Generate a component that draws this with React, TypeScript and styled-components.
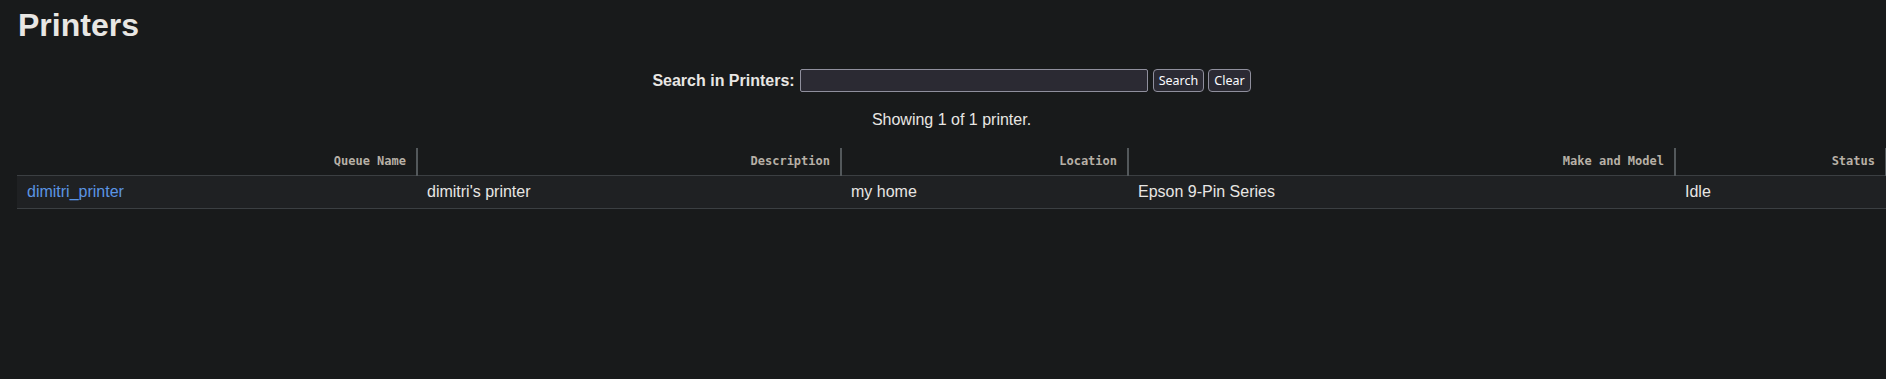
import React from "react";
import styled, { createGlobalStyle } from "styled-components";

const GlobalStyle = createGlobalStyle`
  html, body {
    margin: 0;
    padding: 0;
    background: #181a1b;
  }
  body {
    font-family: "Liberation Sans", Arial, sans-serif;
    font-size: 16px;
    color: #e8e6e3;
  }
`;

const Page = styled.div`
  min-height: 379px;
  padding: 0 0 0 17px;
  box-sizing: border-box;
  overflow: hidden;
`;

const Title = styled.h1`
  margin: 7px 0 0 1px;
  font-size: 32px;
  line-height: 37px;
  font-weight: bold;
  color: #e8e6e3;
`;

const SearchForm = styled.form`
  display: flex;
  align-items: center;
  justify-content: center;
  gap: 5px;
  margin-top: 25px;
`;

const SearchLabel = styled.label`
  font-weight: bold;
  font-size: 16px;
  color: #e8e6e3;
`;

const SearchInput = styled.input`
  box-sizing: border-box;
  width: 348px;
  height: 23px;
  margin: 0;
  padding: 2px 4px;
  background: #2b2a33;
  border: 1px solid #8f8f9d;
  border-radius: 2px;
  color: #fbfbfe;
  font-family: "Noto Sans", sans-serif;
  font-size: 13px;
  outline: none;
`;

const FormButton = styled.button<{ $pad?: number }>`
  box-sizing: border-box;
  height: 23px;
  margin: 0;
  padding: 0 ${(p) => p.$pad ?? 5}px;
  background: #2b2a33;
  border: 1px solid #8f8f9d;
  border-radius: 4px;
  color: #fbfbfe;
  font-family: "Noto Sans", sans-serif;
  font-size: 12.5px;
  line-height: 21px;
  cursor: pointer;
`;

const ButtonGroup = styled.div`
  display: flex;
  gap: 4px;
`;

const Summary = styled.p`
  margin: 19px 0 0;
  text-align: center;
  font-size: 16px;
  line-height: 18px;
  color: #e8e6e3;
`;

const ListTable = styled.table`
  margin-top: 19px;
  width: 1869px;
  border-collapse: collapse;
  table-layout: fixed;
`;

const HeadCell = styled.th`
  height: 27px;
  padding: 0 10px;
  box-sizing: border-box;
  text-align: right;
  vertical-align: middle;
  font-family: "DejaVu Sans Mono", "Liberation Mono", monospace;
  font-size: 12px;
  font-weight: bold;
  color: #b7b0a6;
  border-right: 2px solid #53585b;
`;

const BodyRow = styled.tr`
  background: #1f2123;
  border-top: 1px solid #3b3f42;
  border-bottom: 1px solid #3b3f42;
`;

const BodyCell = styled.td`
  height: 33px;
  padding: 1px 10px 0;
  box-sizing: border-box;
  vertical-align: middle;
  font-size: 16px;
  color: #e8e6e3;
  white-space: nowrap;
`;

const QueueLink = styled.a`
  color: #5b95e3;
  text-decoration: none;
`;

const columns = [
  { label: "Queue Name", width: 400 },
  { label: "Description", width: 424 },
  { label: "Location", width: 287 },
  { label: "Make and Model", width: 547 },
  { label: "Status", width: 211 },
];

const printers = [
  {
    queue: "dimitri_printer",
    description: "dimitri's printer",
    location: "my home",
    model: "Epson 9-Pin Series",
    status: "Idle",
  },
];

export default function App() {
  return (
    <>
      <GlobalStyle />
      <Page>
        <Title>Printers</Title>
        <SearchForm onSubmit={(e) => e.preventDefault()}>
          <SearchLabel htmlFor="query">Search in Printers:</SearchLabel>
          <SearchInput id="query" type="search" />
          <ButtonGroup>
            <FormButton type="submit" $pad={5}>Search</FormButton>
            <FormButton type="button" $pad={5}>Clear</FormButton>
          </ButtonGroup>
        </SearchForm>
        <Summary>Showing 1 of 1 printer.</Summary>
        <ListTable>
          <colgroup>
            {columns.map((c) => (
              <col key={c.label} style={{ width: c.width }} />
            ))}
          </colgroup>
          <thead>
            <tr>
              {columns.map((c) => (
                <HeadCell key={c.label}>{c.label}</HeadCell>
              ))}
            </tr>
          </thead>
          <tbody>
            {printers.map((p) => (
              <BodyRow key={p.queue}>
                <BodyCell>
                  <QueueLink href="#">{p.queue}</QueueLink>
                </BodyCell>
                <BodyCell>{p.description}</BodyCell>
                <BodyCell>{p.location}</BodyCell>
                <BodyCell>{p.model}</BodyCell>
                <BodyCell>{p.status}</BodyCell>
              </BodyRow>
            ))}
          </tbody>
        </ListTable>
      </Page>
    </>
  );
}
